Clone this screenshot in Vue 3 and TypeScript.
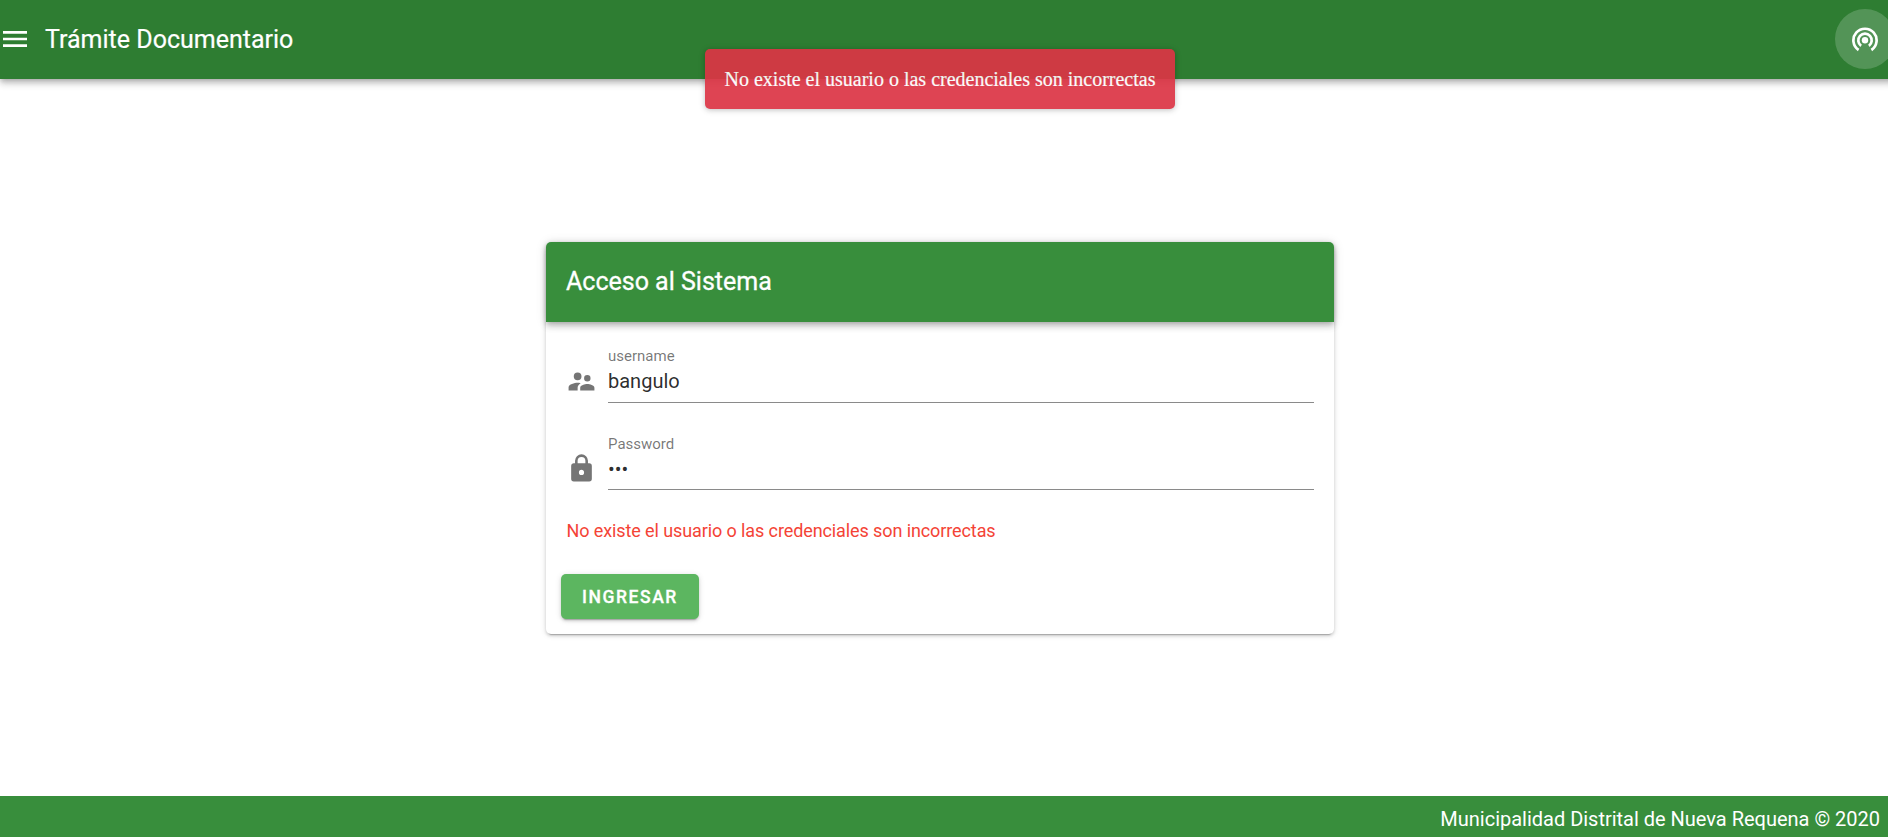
<script setup lang="ts">
import { ref } from 'vue'

const username = ref('bangulo')
const password = ref('123')
const message = 'No existe el usuario o las credenciales son incorrectas'
</script>

<template>
  <div class="app">
    <header class="bar">
      <svg class="menu" viewBox="0 0 24 24"><path d="M3,6H21V8H3V6M3,11H21V13H3V11M3,16H21V18H3V16Z" /></svg>
      <span class="bar-title">Trámite Documentario</span>
      <button class="round" type="button">
        <svg viewBox="0 0 26 26" fill="none" stroke="#fff" stroke-width="2.7">
          <circle cx="13" cy="14.3" r="3.2" fill="#fff" stroke="none" />
          <path d="M9.1 19.8A6.7 6.7 0 1 1 16.9 19.8" />
          <path d="M6.6 24A11.6 11.6 0 1 1 19.4 24" />
        </svg>
      </button>
    </header>

    <div class="toast" role="alert">{{ message }}</div>

    <main class="content">
      <form class="card" @submit.prevent>
        <h1 class="card-title">Acceso al Sistema</h1>
        <div class="fields">
          <label class="field">
            <svg class="icon" viewBox="0 0 24 24"><path d="M16.5,12A2.5,2.5 0 0,0 19,9.5A2.5,2.5 0 0,0 16.5,7A2.5,2.5 0 0,0 14,9.5A2.5,2.5 0 0,0 16.5,12M9,11A3,3 0 0,0 12,8A3,3 0 0,0 9,5A3,3 0 0,0 6,8A3,3 0 0,0 9,11M16.5,14C14.67,14 11,14.92 11,16.75V19H22V16.75C22,14.92 18.33,14 16.5,14M9,13C6.67,13 2,14.17 2,16.5V19H9V16.75C9,15.9 9.33,14.41 11.37,13.28C10.5,13.1 9.66,13 9,13Z" /></svg>
            <span class="slot">
              <span class="caption">username</span>
              <input v-model="username" type="text" />
            </span>
          </label>
          <label class="field">
            <svg class="icon" viewBox="0 0 24 24"><path d="M12,17A2,2 0 0,0 14,15C14,13.89 13.1,13 12,13A2,2 0 0,0 10,15A2,2 0 0,0 12,17M18,8A2,2 0 0,1 20,10V20A2,2 0 0,1 18,22H6A2,2 0 0,1 4,20V10C4,8.89 4.9,8 6,8H7V6A5,5 0 0,1 12,1A5,5 0 0,1 17,6V8H18M12,3A3,3 0 0,0 9,6V8H15V6A3,3 0 0,0 12,3Z" /></svg>
            <span class="slot secret">
              <span class="caption">Password</span>
              <input v-model="password" type="password" />
            </span>
          </label>
          <p class="error">{{ message }}</p>
        </div>
        <button class="submit" type="submit">INGRESAR</button>
      </form>
    </main>

    <footer class="footer">Municipalidad Distrital de Nueva Requena © 2020</footer>
  </div>
</template>

<style>
body {
  margin: 0;
  overflow: hidden;
}
</style>

<style scoped>
.app {
  position: relative;
  display: flex;
  flex-direction: column;
  height: 100vh;
  overflow: hidden;
  background: #fff;
  font-family: Roboto, "Liberation Sans", sans-serif;
}

.bar {
  flex: none;
  box-sizing: border-box;
  display: flex;
  align-items: center;
  height: 79px;
  margin-right: -7px;
  padding: 0 0 1px 45px;
  background: #2e7d32;
  color: #fff;
  box-shadow: 0 2px 5px -1px rgba(0, 0, 0, 0.2), 0 5px 6px rgba(0, 0, 0, 0.14), 0 1px 12px rgba(0, 0, 0, 0.12);
}

.menu {
  width: 32px;
  height: 32px;
  margin-left: -46px;
  margin-right: 14px;
  fill: currentColor;
}

.bar-title {
  padding-top: 1px;
  font-size: 25px;
  line-height: 30px;
  -webkit-text-stroke: 0.2px;
}

.round {
  display: flex;
  align-items: center;
  justify-content: center;
  width: 60px;
  height: 60px;
  margin: 0 0 0 auto;
  padding: 0;
  border: 0;
  border-radius: 50%;
  background: rgba(255, 255, 255, 0.18);
}

.round svg {
  width: 26px;
  height: 26px;
}

.toast {
  position: absolute;
  top: 49px;
  left: 705px;
  box-sizing: border-box;
  width: 470px;
  height: 60px;
  border-radius: 5px;
  background: #dc3545;
  color: #fff;
  opacity: 0.92;
  box-shadow: 0 1px 4px rgba(0, 0, 0, 0.12), 0 1px 7px rgba(0, 0, 0, 0.16);
  font-family: "Liberation Serif", serif;
  font-size: 20px;
  line-height: 61px;
  text-align: center;
  white-space: nowrap;
  -webkit-text-stroke: 0.2px;
}

.content {
  flex: 1;
  display: flex;
  justify-content: center;
  align-items: flex-start;
  padding: 163px 8px 0 0;
}

.card {
  box-sizing: border-box;
  width: 788px;
  height: 392px;
  border-radius: 5px;
  background: #fff;
  box-shadow: 0 4px 1px -3px rgba(0, 0, 0, 0.2), 0 2px 3px rgba(0, 0, 0, 0.14), 0 1px 6px rgba(0, 0, 0, 0.12);
}

.card-title {
  margin: 0;
  padding-left: 20px;
  border-radius: 5px 5px 0 0;
  background: #388e3c;
  color: #fff;
  box-shadow: 0 2px 5px -1px rgba(0, 0, 0, 0.2), 0 5px 6px rgba(0, 0, 0, 0.14), 0 1px 12px rgba(0, 0, 0, 0.12);
  font-size: 25px;
  font-weight: 400;
  line-height: 80px;
  height: 80px;
  -webkit-text-stroke: 0.3px;
}

.fields {
  padding: 25px 20px 0;
}

.field {
  display: flex;
  height: 87px;
}

.icon {
  flex: none;
  width: 31px;
  height: 31px;
  margin: 19px 11px 0 0;
  fill: #757575;
}

.slot {
  flex: 1;
  box-sizing: border-box;
  display: flex;
  flex-direction: column;
  height: 56px;
  border-bottom: 1px solid #8a8a8a;
}

.caption {
  color: rgba(0, 0, 0, 0.54);
  font-size: 15px;
  line-height: 18px;
}

.secret .caption {
  padding-top: 1px;
}

input {
  width: 100%;
  height: 32px;
  padding: 0;
  border: 0;
  outline: 0;
  background: transparent;
  color: rgba(0, 0, 0, 0.84);
  font: 400 20px/32px Roboto, sans-serif;
}

.error {
  margin: -2px 0 0;
  padding-left: 0.5px;
  color: #f44336;
  font-size: 18px;
  letter-spacing: -0.1px;
  line-height: 24px;
}

.submit {
  display: block;
  width: 138px;
  height: 45px;
  margin: 31px 0 0 15px;
  padding: 1px 0 0;
  border: 0;
  border-radius: 5px;
  background: #5cb660;
  color: #fff;
  box-shadow: 0 3px 1px -2px rgba(0, 0, 0, 0.2), 0 2px 3px rgba(0, 0, 0, 0.14), 0 1px 6px rgba(0, 0, 0, 0.12);
  font: 500 17.5px/44px Roboto, sans-serif;
  letter-spacing: 0.0892857em;
  -webkit-text-stroke: 0.3px;
}

.footer {
  flex: none;
  box-sizing: border-box;
  height: 41px;
  padding-right: 8px;
  background: #388e3c;
  color: #fff;
  font-size: 20px;
  line-height: 46px;
  text-align: right;
  letter-spacing: -0.01px;
}
</style>
